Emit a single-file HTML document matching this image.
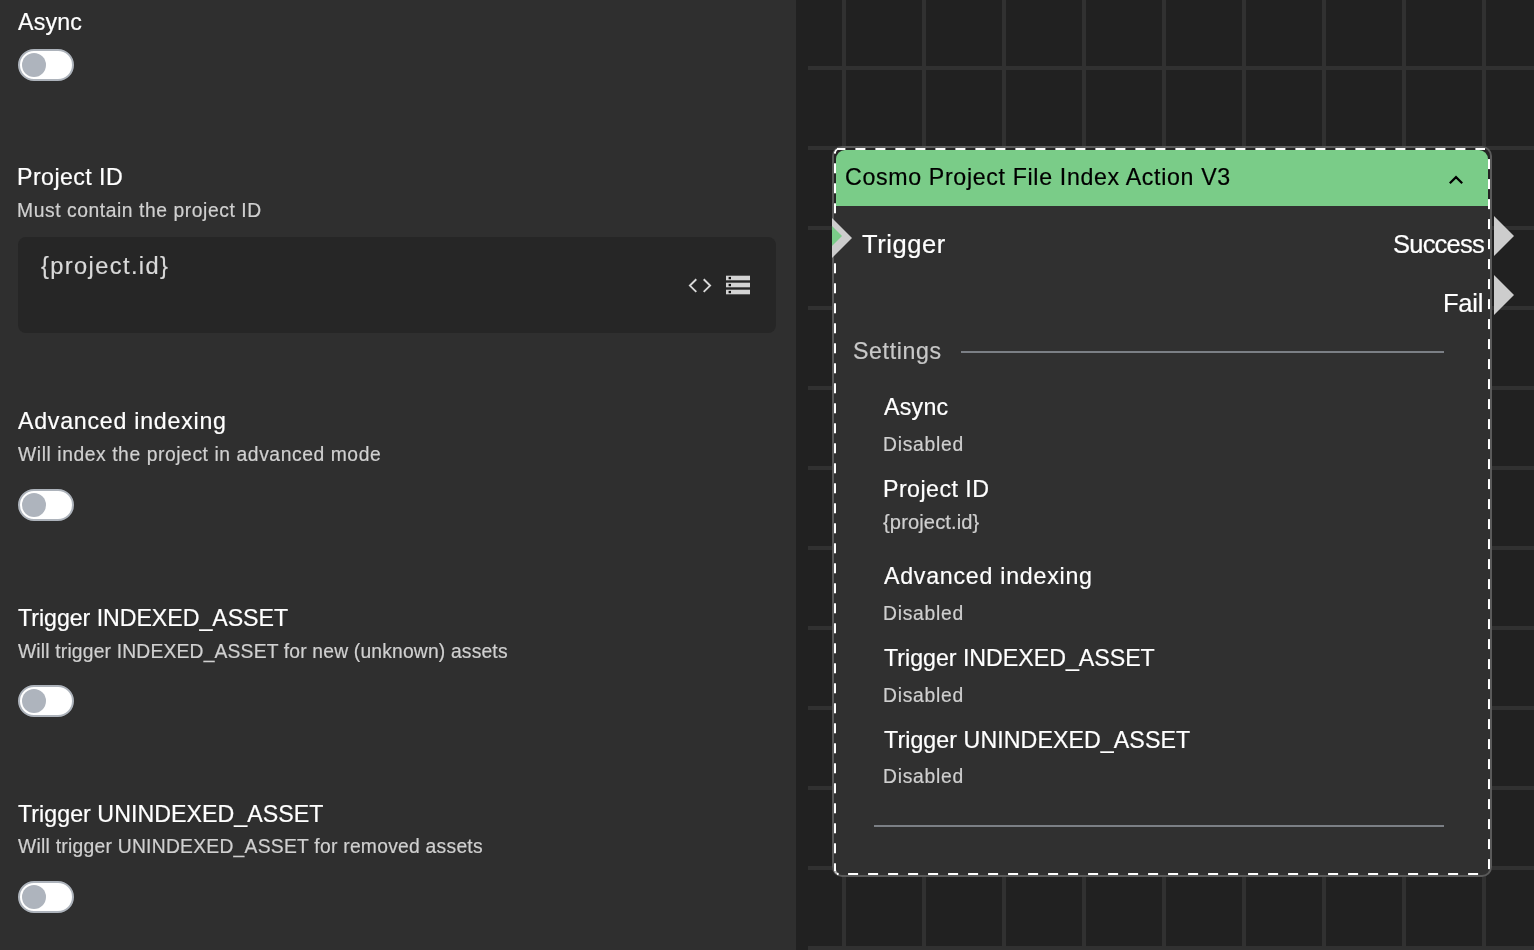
<!DOCTYPE html>
<html><head><meta charset="utf-8">
<style>
*{box-sizing:border-box;margin:0;padding:0}
html,body{width:1534px;height:950px;overflow:hidden;background:#212121;font-family:"Liberation Sans",sans-serif}
.a{position:absolute;white-space:nowrap;line-height:1;will-change:transform;-webkit-text-stroke:0.2px currentColor}
#left{position:absolute;left:0;top:0;width:796px;height:950px;background:#2f2f2f}
.lbl{color:#fff}
.desc{color:#d0d0d0}
.tg{position:absolute;left:18px;width:56px;height:32px;border:2px solid #adb3bb;border-radius:16px;background:#fff}
.tg::after{content:"";position:absolute;left:2px;top:2px;width:24px;height:24px;border-radius:50%;background:#aeb4bd}
#grid{position:absolute;left:796px;top:0;width:738px;height:950px}
.card-out{position:absolute;left:832px;top:146px;width:660px;height:731px;border:2px solid #5a5a5a;border-radius:10px;background:linear-gradient(#242424 0,#242424 58px,#303030 58px)}
.hdr{position:absolute;left:836px;top:150px;width:652px;height:56px;background:#7acc88;border-radius:9px 9px 0 0}
.v{color:#cfcfcf}
.w{color:#fff}
</style></head><body>
<div id="left">
  <span class="a lbl" id="t1" style="left:17.85px;top:11.1px;font-size:23.2px;letter-spacing:0.198px">Async</span>
  <div class="tg" style="top:49px"></div>
  <span class="a lbl" id="t2" style="left:17.16px;top:166.2px;font-size:23.2px;letter-spacing:0.434px">Project ID</span>
  <span class="a desc" id="t3" style="left:17.42px;top:201.3px;font-size:19.3px;letter-spacing:0.571px">Must contain the project ID</span>
  <div style="position:absolute;left:18px;top:237px;width:758px;height:96px;background:#262626;border-radius:8px"></div>
  <span class="a" id="t4" style="left:41.45px;top:255.3px;font-size:23.62px;letter-spacing:1.392px;color:#d9d9d9">{project.id}</span>
  <svg style="position:absolute;left:0;top:0" width="796" height="950">
<polyline points="696.3,279.3 689.9,285.6 696.3,291.9" fill="none" stroke="#d9d9d9" stroke-width="1.9"/>
<polyline points="703.7,279.3 710.1,285.6 703.7,291.9" fill="none" stroke="#d9d9d9" stroke-width="1.9"/>
<rect x="726" y="275.7" width="24" height="4.6" fill="#d4d4d4"/>
<rect x="726" y="282.7" width="24" height="4.6" fill="#d4d4d4"/>
<rect x="726" y="289.7" width="24" height="4.6" fill="#d4d4d4"/>
<rect x="728.6" y="276.9" width="2.4" height="2.3" fill="#111"/>
<rect x="728.6" y="283.9" width="2.4" height="2.3" fill="#111"/>
<rect x="728.6" y="290.9" width="2.4" height="2.3" fill="#111"/>
</svg>
  <span class="a lbl" id="t5" style="left:17.75px;top:410.2px;font-size:23.2px;letter-spacing:0.749px">Advanced indexing</span>
  <span class="a desc" id="t6" style="left:17.87px;top:445.2px;font-size:19.3px;letter-spacing:0.575px">Will index the project in advanced mode</span>
  <div class="tg" style="top:489px"></div>
  <span class="a lbl" id="t7" style="left:17.96px;top:606.6px;font-size:23.2px;letter-spacing:-0.047px">Trigger INDEXED_ASSET</span>
  <span class="a desc" id="t8" style="left:17.87px;top:641.5px;font-size:19.3px;letter-spacing:0.175px">Will trigger INDEXED_ASSET for new (unknown) assets</span>
  <div class="tg" style="top:685px"></div>
  <span class="a lbl" id="t9" style="left:17.66px;top:802.6px;font-size:23.2px;letter-spacing:0.042px">Trigger UNINDEXED_ASSET</span>
  <span class="a desc" id="t10" style="left:17.87px;top:837.2px;font-size:19.3px;letter-spacing:0.255px">Will trigger UNINDEXED_ASSET for removed assets</span>
  <div class="tg" style="top:881px"></div>
</div>
<!-- GRID -->
<svg id="gridsvg" style="position:absolute;left:0;top:0" width="1534" height="950">
<rect x="808" y="66" width="726" height="4" fill="#313131"/>
<rect x="808" y="146" width="726" height="4" fill="#313131"/>
<rect x="808" y="226" width="726" height="4" fill="#313131"/>
<rect x="808" y="306" width="726" height="4" fill="#313131"/>
<rect x="808" y="386" width="726" height="4" fill="#313131"/>
<rect x="808" y="466" width="726" height="4" fill="#313131"/>
<rect x="808" y="546" width="726" height="4" fill="#313131"/>
<rect x="808" y="626" width="726" height="4" fill="#313131"/>
<rect x="808" y="706" width="726" height="4" fill="#313131"/>
<rect x="808" y="786" width="726" height="4" fill="#313131"/>
<rect x="808" y="866" width="726" height="4" fill="#313131"/>
<rect x="808" y="946" width="726" height="4" fill="#313131"/>
<rect x="842" y="0" width="4" height="950" fill="#313131"/>
<rect x="922" y="0" width="4" height="950" fill="#313131"/>
<rect x="1002" y="0" width="4" height="950" fill="#313131"/>
<rect x="1082" y="0" width="4" height="950" fill="#313131"/>
<rect x="1162" y="0" width="4" height="950" fill="#313131"/>
<rect x="1242" y="0" width="4" height="950" fill="#313131"/>
<rect x="1322" y="0" width="4" height="950" fill="#313131"/>
<rect x="1402" y="0" width="4" height="950" fill="#313131"/>
<rect x="1482" y="0" width="4" height="950" fill="#313131"/>
</svg>
<!-- /GRID -->
<!-- CARD -->
<div class="card-out"></div>
<div class="hdr"></div>
<!-- DASH -->
<svg style="position:absolute;left:0;top:0" width="1534" height="950">
<rect x="837.0" y="148" width="8.4" height="2" fill="#fff"/>
<rect x="855.4" y="148" width="10.0" height="2" fill="#fff"/>
<rect x="875.4" y="148" width="10.0" height="2" fill="#fff"/>
<rect x="895.4" y="148" width="10.0" height="2" fill="#fff"/>
<rect x="915.4" y="148" width="10.0" height="2" fill="#fff"/>
<rect x="935.4" y="148" width="10.0" height="2" fill="#fff"/>
<rect x="955.4" y="148" width="10.0" height="2" fill="#fff"/>
<rect x="975.4" y="148" width="10.0" height="2" fill="#fff"/>
<rect x="995.4" y="148" width="10.0" height="2" fill="#fff"/>
<rect x="1015.4" y="148" width="10.0" height="2" fill="#fff"/>
<rect x="1035.4" y="148" width="10.0" height="2" fill="#fff"/>
<rect x="1055.4" y="148" width="10.0" height="2" fill="#fff"/>
<rect x="1075.4" y="148" width="10.0" height="2" fill="#fff"/>
<rect x="1095.4" y="148" width="10.0" height="2" fill="#fff"/>
<rect x="1115.4" y="148" width="10.0" height="2" fill="#fff"/>
<rect x="1135.4" y="148" width="10.0" height="2" fill="#fff"/>
<rect x="1155.4" y="148" width="10.0" height="2" fill="#fff"/>
<rect x="1175.4" y="148" width="10.0" height="2" fill="#fff"/>
<rect x="1195.4" y="148" width="10.0" height="2" fill="#fff"/>
<rect x="1215.4" y="148" width="10.0" height="2" fill="#fff"/>
<rect x="1235.4" y="148" width="10.0" height="2" fill="#fff"/>
<rect x="1255.4" y="148" width="10.0" height="2" fill="#fff"/>
<rect x="1275.4" y="148" width="10.0" height="2" fill="#fff"/>
<rect x="1295.4" y="148" width="10.0" height="2" fill="#fff"/>
<rect x="1315.4" y="148" width="10.0" height="2" fill="#fff"/>
<rect x="1335.4" y="148" width="10.0" height="2" fill="#fff"/>
<rect x="1355.4" y="148" width="10.0" height="2" fill="#fff"/>
<rect x="1375.4" y="148" width="10.0" height="2" fill="#fff"/>
<rect x="1395.4" y="148" width="10.0" height="2" fill="#fff"/>
<rect x="1415.4" y="148" width="10.0" height="2" fill="#fff"/>
<rect x="1435.4" y="148" width="10.0" height="2" fill="#fff"/>
<rect x="1455.4" y="148" width="10.0" height="2" fill="#fff"/>
<rect x="1475.4" y="148" width="9.6" height="2" fill="#fff"/>
<rect x="837.0" y="873" width="1.1" height="2" fill="#fff"/>
<rect x="848.1" y="873" width="10.0" height="2" fill="#fff"/>
<rect x="868.1" y="873" width="10.0" height="2" fill="#fff"/>
<rect x="888.1" y="873" width="10.0" height="2" fill="#fff"/>
<rect x="908.1" y="873" width="10.0" height="2" fill="#fff"/>
<rect x="928.1" y="873" width="10.0" height="2" fill="#fff"/>
<rect x="948.1" y="873" width="10.0" height="2" fill="#fff"/>
<rect x="968.1" y="873" width="10.0" height="2" fill="#fff"/>
<rect x="988.1" y="873" width="10.0" height="2" fill="#fff"/>
<rect x="1008.1" y="873" width="10.0" height="2" fill="#fff"/>
<rect x="1028.1" y="873" width="10.0" height="2" fill="#fff"/>
<rect x="1048.1" y="873" width="10.0" height="2" fill="#fff"/>
<rect x="1068.1" y="873" width="10.0" height="2" fill="#fff"/>
<rect x="1088.1" y="873" width="10.0" height="2" fill="#fff"/>
<rect x="1108.1" y="873" width="10.0" height="2" fill="#fff"/>
<rect x="1128.1" y="873" width="10.0" height="2" fill="#fff"/>
<rect x="1148.1" y="873" width="10.0" height="2" fill="#fff"/>
<rect x="1168.1" y="873" width="10.0" height="2" fill="#fff"/>
<rect x="1188.1" y="873" width="10.0" height="2" fill="#fff"/>
<rect x="1208.1" y="873" width="10.0" height="2" fill="#fff"/>
<rect x="1228.1" y="873" width="10.0" height="2" fill="#fff"/>
<rect x="1248.1" y="873" width="10.0" height="2" fill="#fff"/>
<rect x="1268.1" y="873" width="10.0" height="2" fill="#fff"/>
<rect x="1288.1" y="873" width="10.0" height="2" fill="#fff"/>
<rect x="1308.1" y="873" width="10.0" height="2" fill="#fff"/>
<rect x="1328.1" y="873" width="10.0" height="2" fill="#fff"/>
<rect x="1348.1" y="873" width="10.0" height="2" fill="#fff"/>
<rect x="1368.1" y="873" width="10.0" height="2" fill="#fff"/>
<rect x="1388.1" y="873" width="10.0" height="2" fill="#fff"/>
<rect x="1408.1" y="873" width="10.0" height="2" fill="#fff"/>
<rect x="1428.1" y="873" width="10.0" height="2" fill="#fff"/>
<rect x="1448.1" y="873" width="10.0" height="2" fill="#fff"/>
<rect x="1468.1" y="873" width="10.0" height="2" fill="#fff"/>
<rect x="834" y="152.0" width="2" height="1.3" fill="#fff"/>
<rect x="834" y="163.3" width="2" height="10.0" fill="#fff"/>
<rect x="834" y="183.3" width="2" height="10.0" fill="#fff"/>
<rect x="834" y="203.3" width="2" height="10.0" fill="#fff"/>
<rect x="834" y="223.3" width="2" height="10.0" fill="#fff"/>
<rect x="834" y="243.3" width="2" height="10.0" fill="#fff"/>
<rect x="834" y="263.3" width="2" height="10.0" fill="#fff"/>
<rect x="834" y="283.3" width="2" height="10.0" fill="#fff"/>
<rect x="834" y="303.3" width="2" height="10.0" fill="#fff"/>
<rect x="834" y="323.3" width="2" height="10.0" fill="#fff"/>
<rect x="834" y="343.3" width="2" height="10.0" fill="#fff"/>
<rect x="834" y="363.3" width="2" height="10.0" fill="#fff"/>
<rect x="834" y="383.3" width="2" height="10.0" fill="#fff"/>
<rect x="834" y="403.3" width="2" height="10.0" fill="#fff"/>
<rect x="834" y="423.3" width="2" height="10.0" fill="#fff"/>
<rect x="834" y="443.3" width="2" height="10.0" fill="#fff"/>
<rect x="834" y="463.3" width="2" height="10.0" fill="#fff"/>
<rect x="834" y="483.3" width="2" height="10.0" fill="#fff"/>
<rect x="834" y="503.3" width="2" height="10.0" fill="#fff"/>
<rect x="834" y="523.3" width="2" height="10.0" fill="#fff"/>
<rect x="834" y="543.3" width="2" height="10.0" fill="#fff"/>
<rect x="834" y="563.3" width="2" height="10.0" fill="#fff"/>
<rect x="834" y="583.3" width="2" height="10.0" fill="#fff"/>
<rect x="834" y="603.3" width="2" height="10.0" fill="#fff"/>
<rect x="834" y="623.3" width="2" height="10.0" fill="#fff"/>
<rect x="834" y="643.3" width="2" height="10.0" fill="#fff"/>
<rect x="834" y="663.3" width="2" height="10.0" fill="#fff"/>
<rect x="834" y="683.3" width="2" height="10.0" fill="#fff"/>
<rect x="834" y="703.3" width="2" height="10.0" fill="#fff"/>
<rect x="834" y="723.3" width="2" height="10.0" fill="#fff"/>
<rect x="834" y="743.3" width="2" height="10.0" fill="#fff"/>
<rect x="834" y="763.3" width="2" height="10.0" fill="#fff"/>
<rect x="834" y="783.3" width="2" height="10.0" fill="#fff"/>
<rect x="834" y="803.3" width="2" height="10.0" fill="#fff"/>
<rect x="834" y="823.3" width="2" height="10.0" fill="#fff"/>
<rect x="834" y="843.3" width="2" height="10.0" fill="#fff"/>
<rect x="834" y="863.3" width="2" height="7.7" fill="#fff"/>
<rect x="1488" y="159.1" width="2" height="10.0" fill="#fff"/>
<rect x="1488" y="179.1" width="2" height="10.0" fill="#fff"/>
<rect x="1488" y="199.1" width="2" height="10.0" fill="#fff"/>
<rect x="1488" y="219.1" width="2" height="10.0" fill="#fff"/>
<rect x="1488" y="239.1" width="2" height="10.0" fill="#fff"/>
<rect x="1488" y="259.1" width="2" height="10.0" fill="#fff"/>
<rect x="1488" y="279.1" width="2" height="10.0" fill="#fff"/>
<rect x="1488" y="299.1" width="2" height="10.0" fill="#fff"/>
<rect x="1488" y="319.1" width="2" height="10.0" fill="#fff"/>
<rect x="1488" y="339.1" width="2" height="10.0" fill="#fff"/>
<rect x="1488" y="359.1" width="2" height="10.0" fill="#fff"/>
<rect x="1488" y="379.1" width="2" height="10.0" fill="#fff"/>
<rect x="1488" y="399.1" width="2" height="10.0" fill="#fff"/>
<rect x="1488" y="419.1" width="2" height="10.0" fill="#fff"/>
<rect x="1488" y="439.1" width="2" height="10.0" fill="#fff"/>
<rect x="1488" y="459.1" width="2" height="10.0" fill="#fff"/>
<rect x="1488" y="479.1" width="2" height="10.0" fill="#fff"/>
<rect x="1488" y="499.1" width="2" height="10.0" fill="#fff"/>
<rect x="1488" y="519.1" width="2" height="10.0" fill="#fff"/>
<rect x="1488" y="539.1" width="2" height="10.0" fill="#fff"/>
<rect x="1488" y="559.1" width="2" height="10.0" fill="#fff"/>
<rect x="1488" y="579.1" width="2" height="10.0" fill="#fff"/>
<rect x="1488" y="599.1" width="2" height="10.0" fill="#fff"/>
<rect x="1488" y="619.1" width="2" height="10.0" fill="#fff"/>
<rect x="1488" y="639.1" width="2" height="10.0" fill="#fff"/>
<rect x="1488" y="659.1" width="2" height="10.0" fill="#fff"/>
<rect x="1488" y="679.1" width="2" height="10.0" fill="#fff"/>
<rect x="1488" y="699.1" width="2" height="10.0" fill="#fff"/>
<rect x="1488" y="719.1" width="2" height="10.0" fill="#fff"/>
<rect x="1488" y="739.1" width="2" height="10.0" fill="#fff"/>
<rect x="1488" y="759.1" width="2" height="10.0" fill="#fff"/>
<rect x="1488" y="779.1" width="2" height="10.0" fill="#fff"/>
<rect x="1488" y="799.1" width="2" height="10.0" fill="#fff"/>
<rect x="1488" y="819.1" width="2" height="10.0" fill="#fff"/>
<rect x="1488" y="839.1" width="2" height="10.0" fill="#fff"/>
<rect x="1488" y="859.1" width="2" height="10.0" fill="#fff"/>
<path d="M835 153.5 Q835.2 149.2 839 149" stroke="#fff" stroke-width="1.7" fill="none"/>
<path d="M835 869 Q835.2 873.8 839 874" stroke="#fff" stroke-width="2" fill="none" opacity="0.6"/>
</svg>
<!-- /DASH -->
<!-- SHAPES -->
<svg style="position:absolute;left:0;top:0" width="1534" height="950">
<polyline points="1449.8,183.3 1456,177.1 1462.2,183.3" fill="none" stroke="#000" stroke-width="2.2"/>
<polygon points="832,218 852,238 832,258" fill="#cdcdcd"/>
<polygon points="832,226 842,236 832,246" fill="#7acc88"/>
<polygon points="1494,216 1514,236 1494,256" fill="#cdcdcd"/>
<polygon points="1494,275 1514,295 1494,315" fill="#cdcdcd"/>
<rect x="961" y="351" width="483" height="2" fill="#7b7f85"/>
<rect x="874" y="825" width="570" height="2" fill="#7b7f85"/>
</svg>
<!-- /SHAPES -->
<span class="a" id="c1" style="left:845.37px;top:166.0px;font-size:23.2px;letter-spacing:0.66px;color:#000">Cosmo Project File Index Action V3</span>
<span class="a w" id="c2" style="left:861.82px;top:232.0px;font-size:25.5px;letter-spacing:0.575px">Trigger</span>
<span class="a w" id="c3" style="left:1392.88px;top:232.2px;font-size:25.5px;letter-spacing:-0.779px">Success</span>
<span class="a w" id="c4" style="left:1443.24px;top:291.1px;font-size:25.5px;letter-spacing:-0.259px">Fail</span>
<span class="a" id="c5" style="left:853.25px;top:340.2px;font-size:23.2px;letter-spacing:0.614px;color:#c8c8c8">Settings</span>
<span class="a w" id="c6" style="left:884.05px;top:396.3px;font-size:23.2px;letter-spacing:0.248px">Async</span>
<span class="a v" id="c7" style="left:883.22px;top:434.8px;font-size:19.3px;letter-spacing:0.726px">Disabled</span>
<span class="a w" id="c8" style="left:883.36px;top:478.3px;font-size:23.2px;letter-spacing:0.467px">Project ID</span>
<span class="a v" id="c9" style="left:883.48px;top:511.9px;font-size:20.11px;letter-spacing:0.117px">{project.id}</span>
<span class="a w" id="c10" style="left:883.85px;top:564.9px;font-size:23.2px;letter-spacing:0.749px">Advanced indexing</span>
<span class="a v" id="c11" style="left:883.22px;top:603.5px;font-size:19.3px;letter-spacing:0.726px">Disabled</span>
<span class="a w" id="c12" style="left:883.66px;top:646.9px;font-size:23.2px;letter-spacing:-0.012px">Trigger INDEXED_ASSET</span>
<span class="a v" id="c13" style="left:883.22px;top:685.5px;font-size:19.3px;letter-spacing:0.726px">Disabled</span>
<span class="a w" id="c14" style="left:883.66px;top:729.0px;font-size:23.2px;letter-spacing:0.073px">Trigger UNINDEXED_ASSET</span>
<span class="a v" id="c15" style="left:883.22px;top:767.3px;font-size:19.3px;letter-spacing:0.726px">Disabled</span>
</body></html>
